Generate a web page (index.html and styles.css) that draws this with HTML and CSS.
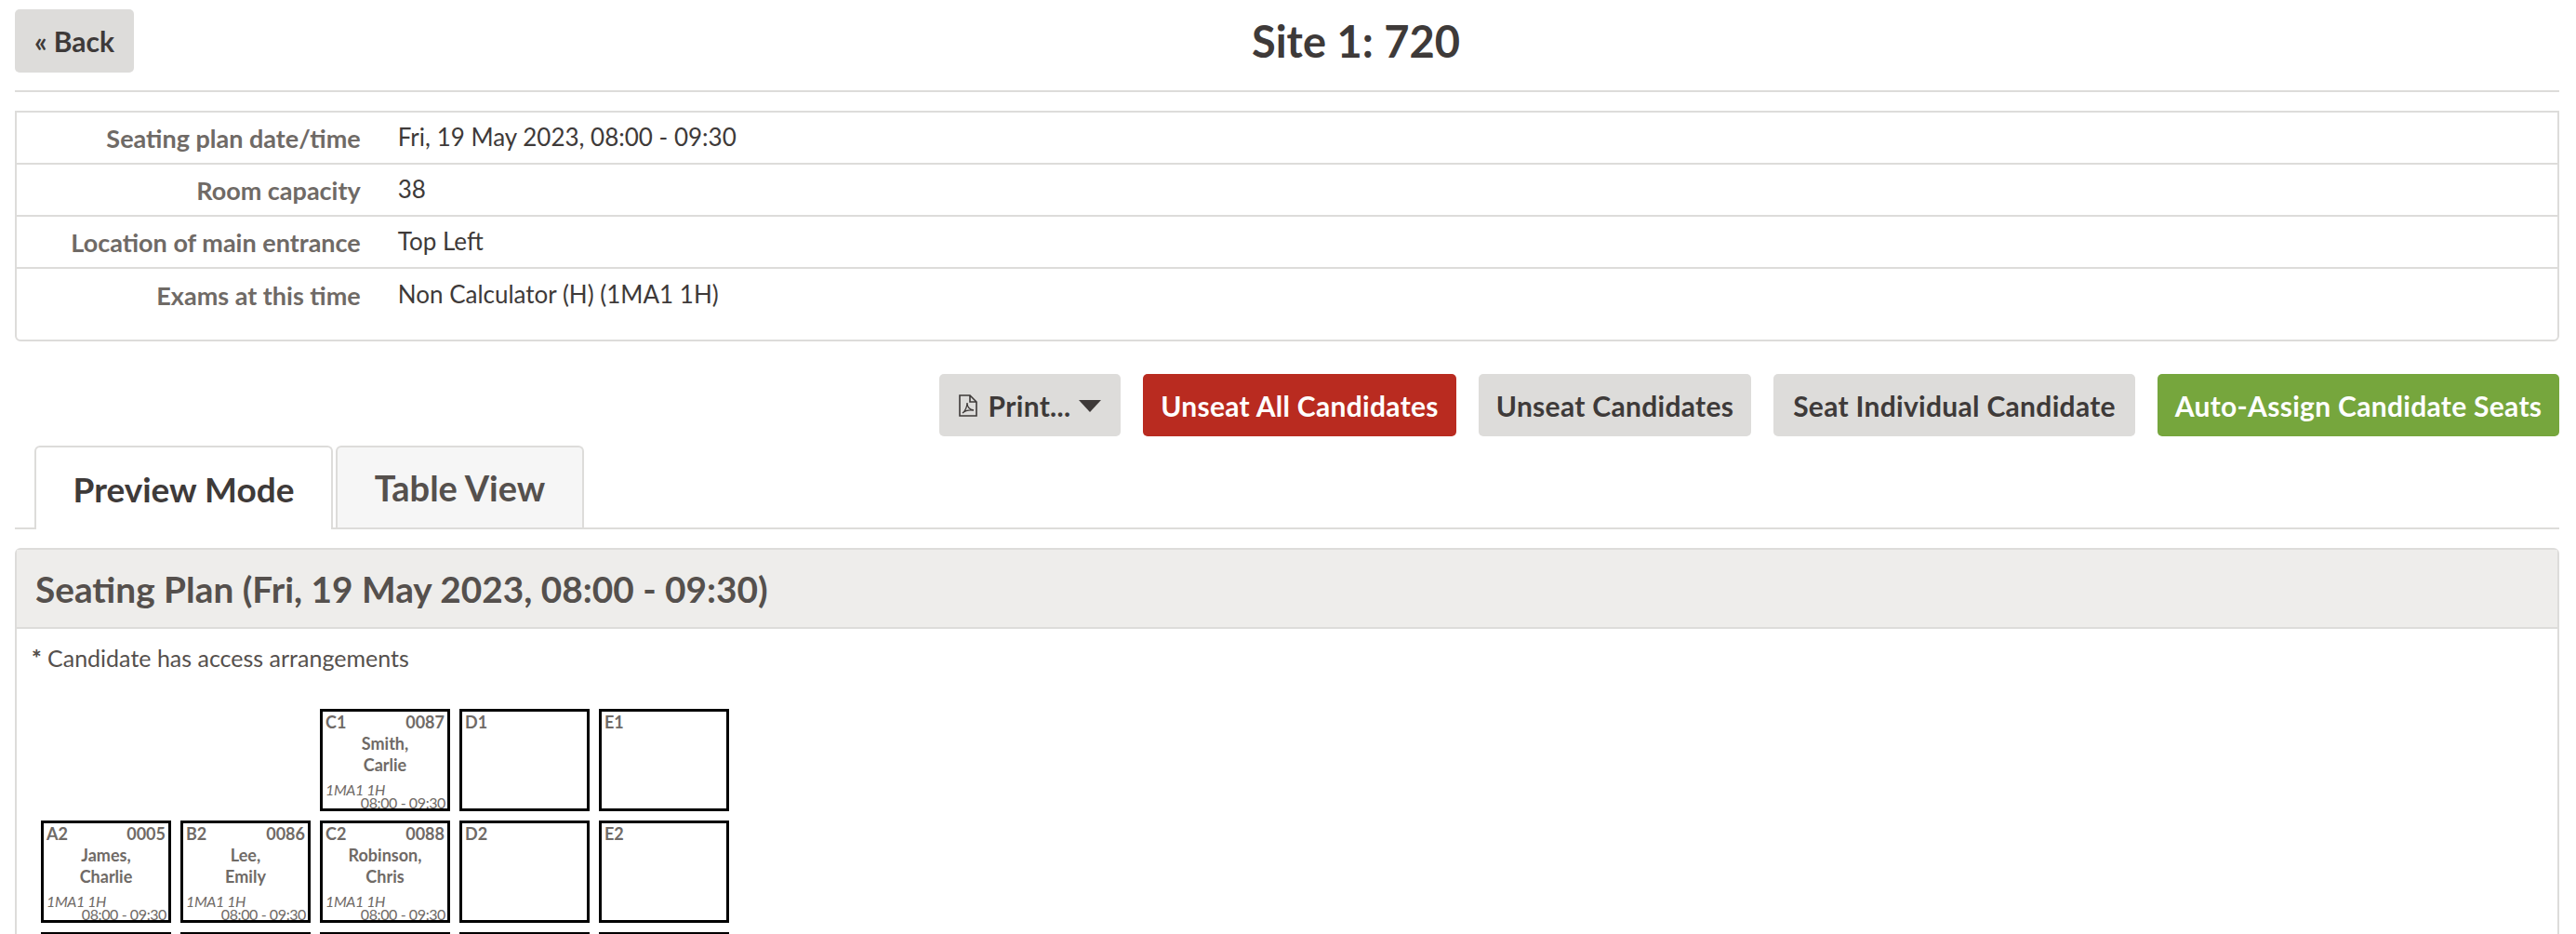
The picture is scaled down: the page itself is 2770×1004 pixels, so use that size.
FILE: index.html
```html
<!DOCTYPE html>
<html lang="en">
<head>
<meta charset="utf-8">
<title>Site 1: 720</title>
<link rel="stylesheet" href="styles.css">
</head>
<body>
<div class="page">
  <header class="topbar">
    <a class="btn btn-back">« Back</a>
    <h1 class="title">Site 1: 720</h1>
  </header>

  <table class="info">
    <tr><th>Seating plan date/time</th><td>Fri, 19 May 2023, 08:00 - 09:30</td></tr>
    <tr><th>Room capacity</th><td>38</td></tr>
    <tr><th>Location of main entrance</th><td>Top Left</td></tr>
    <tr><th>Exams at this time</th><td>Non Calculator (H) (1MA1 1H)</td></tr>
  </table>

  <div class="actions">
    <a class="btn btn-print">
      <svg class="pdf" viewBox="0 0 20 24" width="20" height="24" aria-hidden="true">
        <path d="M1 1h11l7 7v15H1z M12 1v7h7" fill="none" stroke="#3e3a39" stroke-width="1.6"/>
        <path d="M4 20c3-2 5-7 5-11 0 4 2 7 7 8-4-.5-9 0-12 3z" fill="none" stroke="#3e3a39" stroke-width="1.3"/>
      </svg>
      Print...
      <svg class="caret" viewBox="0 0 24 13" width="24" height="13" aria-hidden="true"><path d="M0 0h24L12 13z" fill="#3e3a39"/></svg>
    </a>
    <a class="btn btn-red">Unseat All Candidates</a>
    <a class="btn btn-unseat">Unseat Candidates</a>
    <a class="btn btn-seat">Seat Individual Candidate</a>
    <a class="btn btn-green">Auto-Assign Candidate Seats</a>
  </div>

  <nav class="tabs">
    <a class="tab tab-active">Preview Mode</a>
    <a class="tab">Table View</a>
  </nav>

  <section class="panel">
    <h2 class="panel-head">Seating Plan (Fri, 19 May 2023, 08:00 - 09:30)</h2>
    <div class="panel-body">
      <p class="note"><span class="star">*</span> Candidate has access arrangements</p>
      <div class="seats">
        <div class="seat seat-c1">
          <div class="seat-top"><span>C1</span><span>0087</span></div>
          <div class="seat-name">Smith,<br>Carlie</div>
          <div class="seat-exam">1MA1 1H</div>
          <div class="seat-time">08:00 - 09:30</div>
        </div>
        <div class="seat"><div class="seat-top"><span>D1</span></div></div>
        <div class="seat"><div class="seat-top"><span>E1</span></div></div>

        <div class="seat">
          <div class="seat-top"><span>A2</span><span>0005</span></div>
          <div class="seat-name">James,<br>Charlie</div>
          <div class="seat-exam">1MA1 1H</div>
          <div class="seat-time">08:00 - 09:30</div>
        </div>
        <div class="seat">
          <div class="seat-top"><span>B2</span><span>0086</span></div>
          <div class="seat-name">Lee,<br>Emily</div>
          <div class="seat-exam">1MA1 1H</div>
          <div class="seat-time">08:00 - 09:30</div>
        </div>
        <div class="seat">
          <div class="seat-top"><span>C2</span><span>0088</span></div>
          <div class="seat-name">Robinson,<br>Chris</div>
          <div class="seat-exam">1MA1 1H</div>
          <div class="seat-time">08:00 - 09:30</div>
        </div>
        <div class="seat"><div class="seat-top"><span>D2</span></div></div>
        <div class="seat"><div class="seat-top"><span>E2</span></div></div>

        <div class="seat"></div>
        <div class="seat"></div>
        <div class="seat"></div>
        <div class="seat"></div>
        <div class="seat"></div>
      </div>
    </div>
  </section>
</div>
</body>
</html>
```

FILE: styles.css
```css
* { box-sizing: border-box; }

html, body {
  margin: 0;
  height: 1004px;
  overflow: hidden;
  background: #fff;
}

body {
  font-family: Lato, "Noto Sans", sans-serif;
  font-size: 26px;
  color: #3e3a39;
}

.page {
  height: 1004px;
  overflow: hidden;
  padding: 10px 18px 0 16px;
}

.topbar {
  display: flex;
  align-items: flex-start;
  height: 89px;
  border-bottom: 2px solid #dddcda;
}

.title {
  flex: 1;
  margin: 0;
  padding-left: 20px;
  text-align: center;
  font-size: 47px;
  font-weight: 700;
  line-height: 68px;
}

.btn {
  display: inline-flex;
  align-items: center;
  justify-content: center;
  height: 67px;
  padding: 0 20px;
  border-radius: 5px;
  background: #dddcda;
  color: #3e3a39;
  font-size: 30px;
  font-weight: 700;
  letter-spacing: 0.3px;
  white-space: nowrap;
}

.btn-back { width: 128px; height: 68px; padding: 0; letter-spacing: 0; }
.btn-red { width: 337px; background: #b92b20; color: #fff; }
.btn-unseat { width: 293px; }
.btn-seat { width: 389px; }
.btn-green { width: 432px; background: #76a63d; color: #fff; }
.btn-print { width: 195px; gap: 9px; padding: 0; }
.pdf { margin-right: 3px; }
.caret { margin-top: 2px; }

.info {
  width: 100%;
  height: 248px;
  margin-top: 20px;
  border: 2px solid #dddcda;
  border-radius: 0 0 6px 6px;
  border-collapse: separate;
  border-spacing: 0;
  display: block;
}

.info th,
.info td {
  height: 56px;
  padding: 0;
  border-bottom: 2px solid #dddcda;
  vertical-align: middle;
}

.info tr:last-child th,
.info tr:last-child td { border-bottom: 0; }

.info th {
  width: 370px;
  text-align: right;
  font-size: 27px;
  font-weight: 700;
  color: #6f6a66;
}

.info td {
  width: 2364px;
  padding-left: 40px;
  padding-bottom: 2px;
  font-weight: 400;
  color: #3e3a39;
}

.actions {
  display: flex;
  justify-content: flex-end;
  gap: 24px;
  margin-top: 35px;
}

.tabs {
  display: flex;
  gap: 3px;
  height: 100px;
  padding-left: 21px;
  border-bottom: 2px solid #dddcda;
  align-items: flex-end;
}

.tab {
  display: flex;
  align-items: center;
  justify-content: center;
  height: 88px;
  width: 267px;
  border: 2px solid #dddcda;
  border-bottom: 0;
  border-radius: 6px 6px 0 0;
  background: #f6f6f6;
  color: #55504d;
  font-size: 38px;
  font-weight: 700;
}

.tab-active {
  width: 321px;
  height: 90px;
  margin-bottom: -2px;
  background: #fff;
  color: #3e3a39;
  font-size: 37px;
}

.panel {
  margin-top: 20px;
  border: 2px solid #dddcda;
  border-radius: 6px 6px 0 0;
}

.panel-head {
  margin: 0;
  height: 85px;
  padding: 0 20px;
  display: flex;
  align-items: center;
  background: #eeedeb;
  border-bottom: 2px solid #dddcda;
  color: #55504d;
  font-size: 38.8px;
  font-weight: 700;
}

.panel-body { padding: 0 16px; height: 400px; }

.note {
  margin: 0;
  padding-top: 15px;
  line-height: 32px;
  font-size: 25px;
  color: #55504d;
}

.star { font-weight: 900; }

.seats {
  display: grid;
  grid-template-columns: repeat(5, 140px);
  grid-auto-rows: 110px;
  gap: 10px;
  margin-top: 39px;
  margin-left: 10px;
}

.seat {
  display: flex;
  flex-direction: column;
  padding: 0 3px;
  border: 3px solid #000;
  color: #6f6a66;
  font-size: 18px;
  line-height: 23px;
}

.seat-c1 { grid-column-start: 3; }

.seat-top {
  display: flex;
  justify-content: space-between;
  font-weight: 700;
}

.seat-name {
  text-align: center;
  font-weight: 700;
}

.seat-exam {
  margin-top: auto;
  line-height: 14px;
  font-style: italic;
  font-size: 16px;
  letter-spacing: -0.4px;
}

.seat-time {
  margin-right: -1px;
  margin-bottom: -1px;
  text-align: right;
  line-height: 14px;
  font-size: 16px;
  letter-spacing: -0.4px;
}
```
